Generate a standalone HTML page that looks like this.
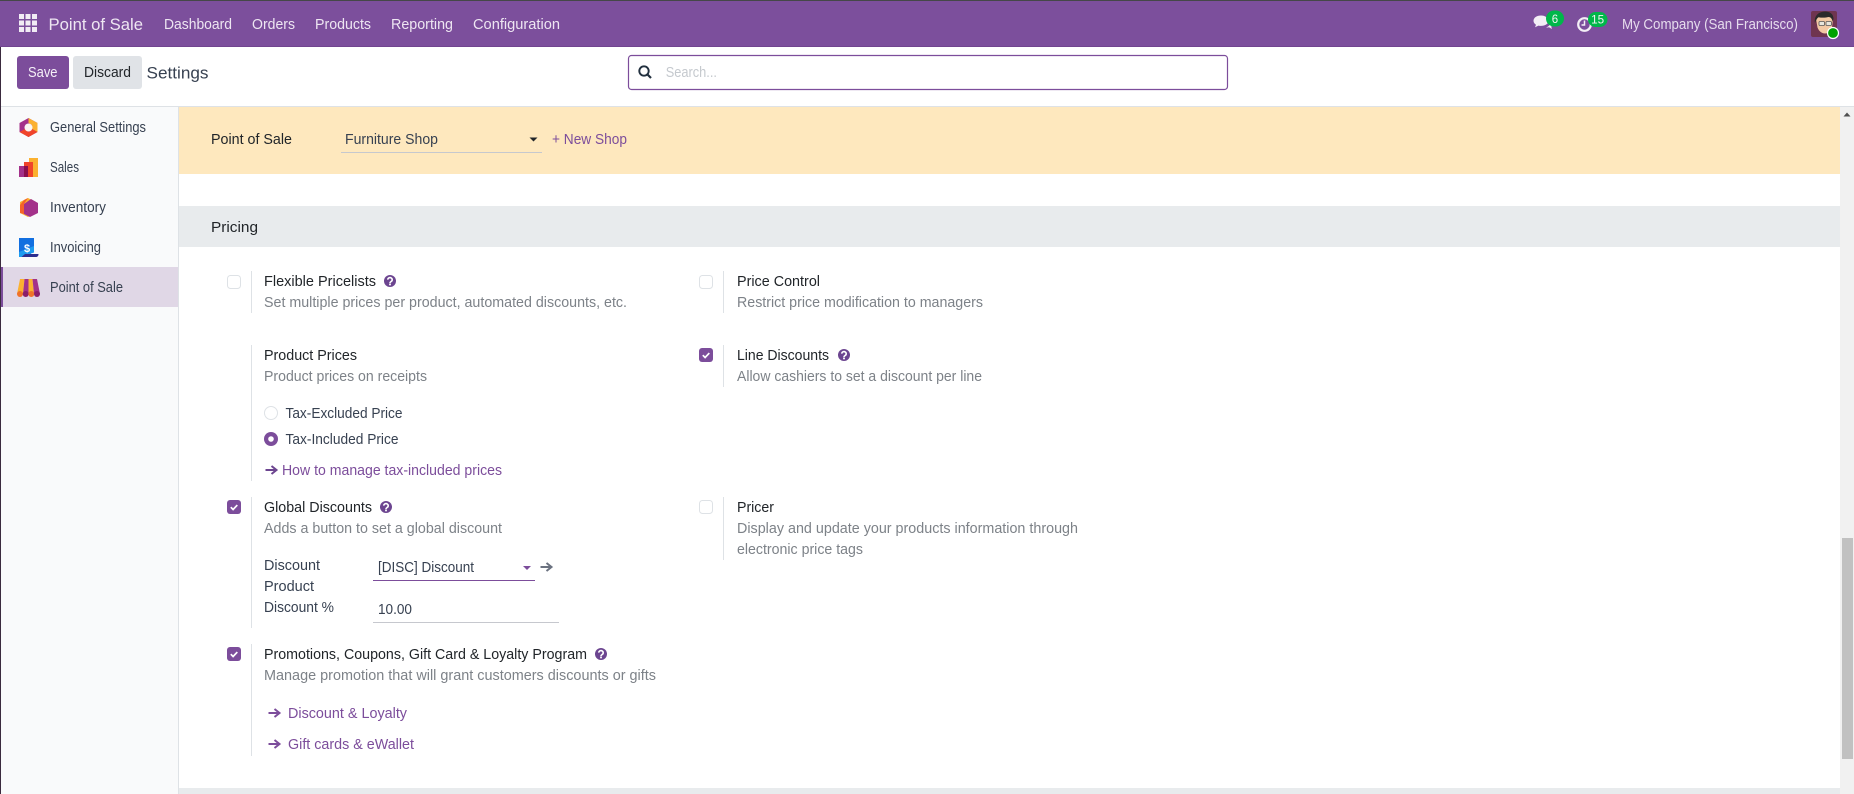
<!DOCTYPE html>
<html>
<head>
<meta charset="utf-8">
<title>Settings</title>
<style>
html,body{margin:0;padding:0;background:#fff;width:1854px;height:794px;overflow:hidden}
svg{display:block}
text{font-family:"Liberation Sans",sans-serif;font-size:14.5px;dominant-baseline:auto}
.t{fill:#212529;font-size:14.5px;-webkit-text-stroke:.3px #212529}
.d{fill:#7d8288;font-size:14.5px}
.l{fill:#374151;font-size:14.5px}
.b{fill:#374151;font-size:14.5px}
.p{fill:#7c4d9b;font-size:14.5px;-webkit-text-stroke:.1px #7c4d9b}
.n{fill:#eee6f2;font-size:15px}
</style>
</head>
<body>
<svg width="1854" height="794" viewBox="0 0 1854 794" xmlns="http://www.w3.org/2000/svg">
<defs>
<g id="chk"><rect x="0" y="0" width="14" height="14" rx="3" fill="#7c4d9b"/><path d="M3.800 7.200l2.300 2.300 4.200-4.400" fill="none" stroke="#fff" stroke-width="1.700"/></g>
<g id="unc"><rect x=".5" y=".5" width="13" height="13" rx="3" fill="#fff" stroke="#dee2e6"/></g>
<g id="help"><circle r="6" fill="#6c4590"/><path d="M-2.200-1.400a2.200 2.100 0 1 1 3.300 1.900c-.8.5-1.100.8-1.100 1.600" fill="none" stroke="#fff" stroke-width="1.600"/><rect x="-.9" y="2.600" width="1.800" height="1.700" fill="#fff"/></g>
<g id="arr"><path d="M0 0H10M6-4l5 4-5 4" fill="none" stroke-width="2"/></g>
</defs>

<rect width="1854" height="794" fill="#fff"/>

<!-- navbar -->
<rect x="0" y="0" width="1854" height="47" fill="#7c4f9c"/>
<rect x="0" y="0" width="1854" height="1" fill="#454748"/>
<rect x="0" y="46" width="1854" height="1" fill="#71458f"/>
<g fill="#f1ecf4">
<rect x="19" y="14" width="5" height="5"/><rect x="25.500" y="14" width="5" height="5"/><rect x="32" y="14" width="5" height="5"/>
<rect x="19" y="20.500" width="5" height="5"/><rect x="25.500" y="20.500" width="5" height="5"/><rect x="32" y="20.500" width="5" height="5"/>
<rect x="19" y="27" width="5" height="5"/><rect x="25.500" y="27" width="5" height="5"/><rect x="32" y="27" width="5" height="5"/>
</g>
<text x="48.500" y="30" class="n" style="font-size:17px" textLength="94.500" lengthAdjust="spacingAndGlyphs">Point of Sale</text>
<text x="164" y="29" class="n" textLength="68" lengthAdjust="spacingAndGlyphs">Dashboard</text>
<text x="252" y="29" class="n" textLength="43" lengthAdjust="spacingAndGlyphs">Orders</text>
<text x="315" y="29" class="n" textLength="56" lengthAdjust="spacingAndGlyphs">Products</text>
<text x="391" y="29" class="n" textLength="62" lengthAdjust="spacingAndGlyphs">Reporting</text>
<text x="473" y="29" class="n" textLength="87" lengthAdjust="spacingAndGlyphs">Configuration</text>

<!-- systray -->
<path d="M1541 15.500c-4.400 0-7.500 2.300-7.500 5.300 0 1.700 1 3.100 2.500 4l-1 2.500 3.500-1.700c.8.200 1.600.300 2.500.300 4.300 0 7.500-2.300 7.500-5.100s-3.200-5.300-7.500-5.300z" fill="#f3eef6"/>
<path d="M1546 27.500c1 .100 2 0 3-.300l3 1.800-.8-2.500c1-.7 1.500-1.600 1.500-2.700l-2.500.5c-.8 1.400-2.200 2.500-4.200 3.200z" fill="#f3eef6"/>
<rect x="1546" y="10.500" width="18" height="16" rx="8" fill="#00b74a"/>
<text x="1555" y="23" text-anchor="middle" fill="#f3f3f3" style="font-size:11.500px">6</text>
<circle cx="1584.500" cy="24.500" r="6.300" fill="none" stroke="#f3eef6" stroke-width="2.200"/>
<path d="M1584.500 20.500v4.500h-3" fill="none" stroke="#f3eef6" stroke-width="1.500"/>
<rect x="1588" y="12" width="19.500" height="15" rx="7.500" fill="#00b74a"/>
<text x="1597.700" y="23.500" text-anchor="middle" fill="#f3f3f3" style="font-size:11.500px" textLength="13" lengthAdjust="spacingAndGlyphs">15</text>
<text x="1622" y="29" fill="#e6dced" style="font-size:15px" textLength="176" lengthAdjust="spacingAndGlyphs">My Company (San Francisco)</text>
<!-- avatar -->
<rect x="1811" y="11" width="26" height="26" rx="2" fill="#6f3550"/>
<path d="M1816 19c0-4 4-6.500 9-6.500s8 2.500 8 6l-1 9c-1 4-4 6-7 6s-6-2-7.500-6z" fill="#f3c9a4"/>
<path d="M1815 23c-1-6 2-11 10-11.500 5 0 8.500 2.500 8.500 7.500l-1 2.500c-.5-3-2-4.500-4-4.500-3 .8-7 .8-10 .2-1.500 1-2.500 3-3.500 5.800z" fill="#2b2a2b"/>
<rect x="1819" y="21.500" width="5.500" height="4" rx="1" fill="#e8e6dc" stroke="#555" stroke-width=".8"/>
<rect x="1826" y="21.500" width="5.500" height="4" rx="1" fill="#e8e6dc" stroke="#555" stroke-width=".8"/>
<circle cx="1833" cy="33" r="5.500" fill="#00a100" stroke="#fff" stroke-width="1.200"/>

<!-- control panel -->
<rect x="0" y="47" width="1854" height="60" fill="#fff"/>
<rect x="17" y="56" width="52" height="33" rx="3" fill="#7c4d9b"/>
<text x="28" y="77" fill="#f5f0f8" style="font-size:14.500px;-webkit-text-stroke:.35px #f5f0f8" textLength="29.500" lengthAdjust="spacingAndGlyphs">Save</text>
<rect x="73" y="56" width="69" height="33" rx="3" fill="#e0e3e7"/>
<text x="84" y="77" fill="#212529" style="font-size:14.500px;-webkit-text-stroke:.35px #212529" textLength="47" lengthAdjust="spacingAndGlyphs">Discard</text>
<text x="146.500" y="78.500" fill="#374151" style="font-size:17px" textLength="62" lengthAdjust="spacingAndGlyphs">Settings</text>
<rect x="628.500" y="55.500" width="599" height="34" rx="3" fill="#fff" stroke="#7c4d9b" stroke-width="1.200"/>
<circle cx="644" cy="71" r="4.700" fill="none" stroke="#22303f" stroke-width="1.900"/>
<path d="M647.500 74.500l3.500 3.500" stroke="#22303f" stroke-width="2.200"/>
<text x="665.700" y="77" fill="#c5c9ce" style="font-size:14.500px" textLength="51.300" lengthAdjust="spacingAndGlyphs">Search...</text>
<rect x="0" y="106" width="1854" height="1" fill="#dee2e6"/>

<!-- sidebar -->
<rect x="0" y="107" width="179" height="687" fill="#f9fafb"/>
<rect x="178" y="107" width="1" height="687" fill="#dee2e6"/>
<rect x="0" y="47" width="1" height="747" fill="#3a2a3e"/>
<rect x="1" y="267" width="177" height="40" fill="#e0d7e6"/>
<rect x="1" y="267" width="2" height="40" fill="#7c4d9b"/>

<!-- general settings icon -->
<polygon points="28.500,118 37.500,123 37.500,132 28.500,137 19.500,132 19.500,123" fill="#a3318a"/>
<polygon points="28.500,118 37.500,123 37.500,132 32,129 32,125 28.500,123" fill="#fbb130"/>
<polygon points="19.500,132 28.500,137 37.500,132 32,129 28.500,132 25,129" fill="#f0442a"/>
<circle cx="28.500" cy="127.500" r="4" fill="#fbf6f2"/>
<!-- sales icon -->
<rect x="29" y="158" width="9" height="19" fill="#fbb130"/>
<rect x="24" y="162" width="9" height="15" fill="#f0442a"/>
<rect x="19" y="166" width="9" height="11" fill="#a3318a"/>
<rect x="24" y="166" width="4" height="11" fill="#8a0f4e"/>
<!-- inventory icon -->
<polygon points="28,198 36,202 36,213 28,217 20,213 20,202" fill="#fbb130"/>
<polygon points="28,198 24,200 20,205 20,213 24,214 24,204" fill="#f5622a"/>
<polygon points="31,199 38,203 38,213 30,217 24,214 24,204" fill="#a3318a"/>
<!-- invoicing icon -->
<path d="M19 238h15v14.500l-3 1v3.500h-12z" fill="#1d9bf0"/>
<path d="M19 238h15v8l-15 6z" fill="#126fe0"/>
<path d="M25 254h13.500c0 2-1 3-3 3h-14z" fill="#2c2e8f"/>
<text x="27" y="252" text-anchor="middle" fill="#fff" style="font-size:11px;font-weight:bold">$</text>
<!-- POS icon -->
<path d="M20 279h4.500l-1.500 15h-6z" fill="#fbb130"/>
<path d="M24.500 279h4l0 15h-5.500z" fill="#a3318a"/>
<path d="M28.500 279h4l1.500 15h-5.500z" fill="#fbb130"/>
<path d="M32.500 279h4.500l3 15h-6z" fill="#a3318a"/>
<g>
<circle cx="20" cy="294" r="3" fill="#f0722a"/><circle cx="25.700" cy="294" r="3" fill="#8a1f6a"/><circle cx="31.300" cy="294" r="3" fill="#f0722a"/><circle cx="37" cy="294" r="3" fill="#8a1f6a"/>
</g>

<text x="50" y="132" class="l" textLength="96" lengthAdjust="spacingAndGlyphs">General Settings</text>
<text x="50" y="172" class="l" textLength="29" lengthAdjust="spacingAndGlyphs">Sales</text>
<text x="50" y="212" class="l" textLength="56" lengthAdjust="spacingAndGlyphs">Inventory</text>
<text x="50" y="252" class="l" textLength="51" lengthAdjust="spacingAndGlyphs">Invoicing</text>
<text x="50" y="292" class="l" textLength="73" lengthAdjust="spacingAndGlyphs">Point of Sale</text>

<!-- banner -->
<rect x="179" y="107" width="1661" height="67" fill="#fee8be"/>
<text x="211" y="144" class="t" textLength="81" lengthAdjust="spacingAndGlyphs">Point of Sale</text>
<text x="345" y="144" class="b" textLength="93" lengthAdjust="spacingAndGlyphs">Furniture Shop</text>
<path d="M529.500 137.500h8l-4 4z" fill="#212529"/>
<rect x="341" y="152" width="201" height="1" fill="#c6c8ce"/>
<text x="552" y="144" class="p" textLength="75" lengthAdjust="spacingAndGlyphs">+ New Shop</text>

<!-- pricing band -->
<rect x="179" y="206" width="1661" height="41" fill="#e8ebed"/>
<text x="211" y="232" class="t" textLength="47" lengthAdjust="spacingAndGlyphs">Pricing</text>

<!-- separators -->
<g fill="#dee2e6">
<rect x="251" y="271" width="1" height="42"/>
<rect x="251" y="345" width="1" height="136"/>
<rect x="251" y="497" width="1" height="131"/>
<rect x="251" y="644" width="1" height="112"/>
<rect x="723" y="271" width="1" height="42"/>
<rect x="723" y="345" width="1" height="42"/>
<rect x="723" y="497" width="1" height="63"/>
</g>

<!-- left column -->
<use href="#unc" x="227" y="275"/>
<text x="264" y="286" class="t" textLength="112" lengthAdjust="spacingAndGlyphs">Flexible Pricelists</text>
<use href="#help" x="390" y="281"/>
<text x="264" y="307" class="d" textLength="363" lengthAdjust="spacingAndGlyphs">Set multiple prices per product, automated discounts, etc.</text>

<text x="264" y="360" class="t" textLength="93" lengthAdjust="spacingAndGlyphs">Product Prices</text>
<text x="264" y="381" class="d" textLength="163" lengthAdjust="spacingAndGlyphs">Product prices on receipts</text>
<circle cx="271" cy="413" r="6.500" fill="#fff" stroke="#dee2e6"/>
<text x="285.500" y="418" class="b" textLength="117" lengthAdjust="spacingAndGlyphs">Tax-Excluded Price</text>
<circle cx="271" cy="439" r="7" fill="#7c4d9b"/><circle cx="271" cy="439" r="2.800" fill="#fff"/>
<text x="285.500" y="444" class="b" textLength="113" lengthAdjust="spacingAndGlyphs">Tax-Included Price</text>
<use href="#arr" x="265.500" y="470" stroke="#6c4590"/>
<text x="282" y="475" class="p" textLength="220" lengthAdjust="spacingAndGlyphs">How to manage tax-included prices</text>

<use href="#chk" x="227" y="500"/>
<text x="264" y="512" class="t" textLength="108" lengthAdjust="spacingAndGlyphs">Global Discounts</text>
<use href="#help" x="386" y="507"/>
<text x="264" y="533" class="d" textLength="238" lengthAdjust="spacingAndGlyphs">Adds a button to set a global discount</text>
<text x="264" y="570" class="b" textLength="56" lengthAdjust="spacingAndGlyphs">Discount</text>
<text x="264" y="591" class="b" textLength="50" lengthAdjust="spacingAndGlyphs">Product</text>
<text x="264" y="612" class="b" textLength="70" lengthAdjust="spacingAndGlyphs">Discount %</text>
<text x="378" y="572" class="b" textLength="96" lengthAdjust="spacingAndGlyphs">[DISC] Discount</text>
<path d="M523 566h8l-4 4z" fill="#7c4d9b"/>
<rect x="373" y="580" width="162" height="1" fill="#7c4d9b"/>
<use href="#arr" x="540.500" y="567" stroke="#6b7280"/>
<text x="378" y="614" class="b" textLength="34" lengthAdjust="spacingAndGlyphs">10.00</text>
<rect x="373" y="622" width="186" height="1" fill="#c6c8ce"/>

<use href="#chk" x="227" y="647"/>
<text x="264" y="659" class="t" textLength="323" lengthAdjust="spacingAndGlyphs">Promotions, Coupons, Gift Card &amp; Loyalty Program</text>
<use href="#help" x="601" y="654"/>
<text x="264" y="680" class="d" textLength="392" lengthAdjust="spacingAndGlyphs">Manage promotion that will grant customers discounts or gifts</text>
<use href="#arr" x="268.500" y="713" stroke="#7c4d9b"/>
<text x="288" y="718" class="p" textLength="119" lengthAdjust="spacingAndGlyphs">Discount &amp; Loyalty</text>
<use href="#arr" x="268.500" y="744" stroke="#7c4d9b"/>
<text x="288" y="749" class="p" textLength="126" lengthAdjust="spacingAndGlyphs">Gift cards &amp; eWallet</text>

<!-- right column -->
<use href="#unc" x="699" y="275"/>
<text x="737" y="286" class="t" textLength="83" lengthAdjust="spacingAndGlyphs">Price Control</text>
<text x="737" y="307" class="d" textLength="246" lengthAdjust="spacingAndGlyphs">Restrict price modification to managers</text>

<use href="#chk" x="699" y="348"/>
<text x="737" y="360" class="t" textLength="92" lengthAdjust="spacingAndGlyphs">Line Discounts</text>
<use href="#help" x="844" y="355"/>
<text x="737" y="381" class="d" textLength="245" lengthAdjust="spacingAndGlyphs">Allow cashiers to set a discount per line</text>

<use href="#unc" x="699" y="500"/>
<text x="737" y="512" class="t" textLength="37" lengthAdjust="spacingAndGlyphs">Pricer</text>
<text x="737" y="533" class="d" textLength="341" lengthAdjust="spacingAndGlyphs">Display and update your products information through</text>
<text x="737" y="554" class="d" textLength="126" lengthAdjust="spacingAndGlyphs">electronic price tags</text>

<!-- bottom band -->
<rect x="179" y="788" width="1661" height="6" fill="#e8ebed"/>

<!-- scrollbar -->
<rect x="1840" y="107" width="14" height="687" fill="#f1f1f1"/>
<path d="M1843.500 116.500l3.500-4 3.500 4z" fill="#505050"/>
<rect x="1842" y="538" width="11" height="221" fill="#c1c1c1"/>
</svg>
</body>
</html>
